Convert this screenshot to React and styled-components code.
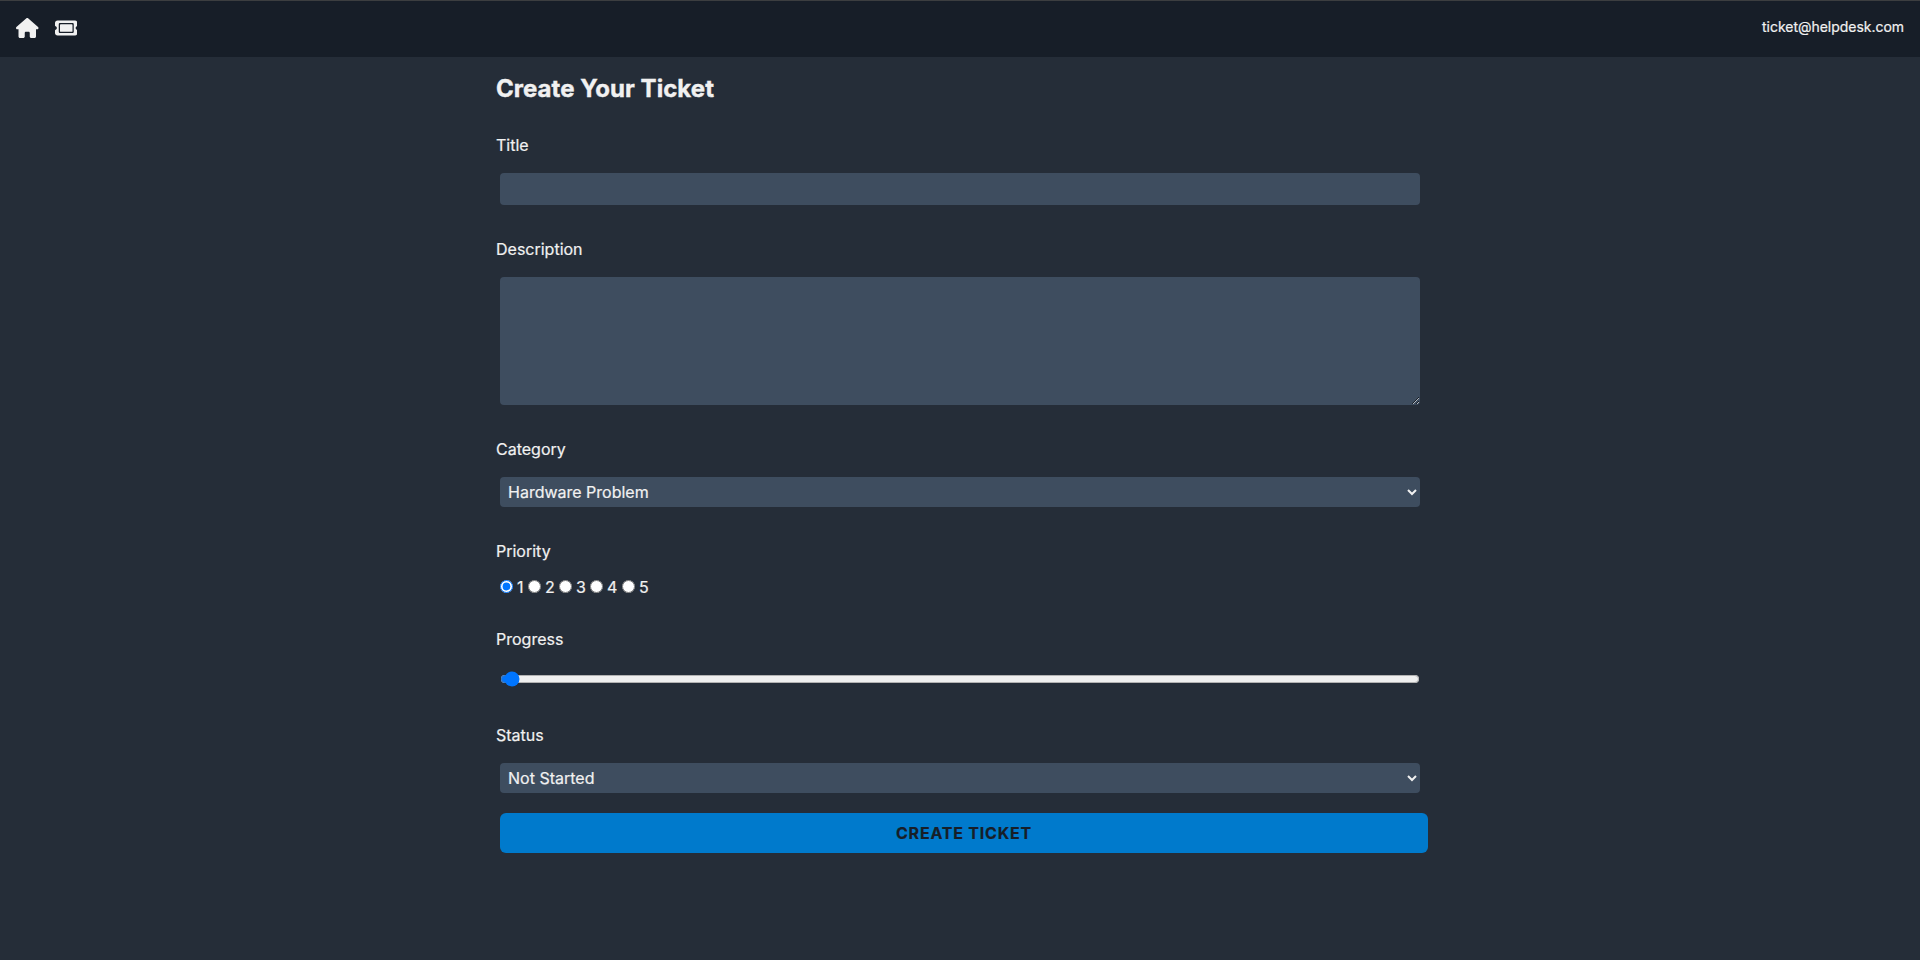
import React from "react";
import styled, { createGlobalStyle } from "styled-components";
import { FaHouse, FaTicket } from "react-icons/fa6";

const GlobalStyle = createGlobalStyle`
  *, *::before, *::after { box-sizing: border-box; }
  body {
    margin: 0;
    background: #252d38;
    color: #f1f1f1;
    font: 400 16px/24px Inter, "Liberation Sans", sans-serif;
    -webkit-text-stroke: 0.2px currentColor;
  }
  input, select, textarea, button { font: inherit; color: inherit; }
`;

const Page = styled.div`
  min-height: 100vh;
`;

const Nav = styled.nav`
  display: flex;
  align-items: center;
  justify-content: space-between;
  height: 57px;
  padding: 0 16px 2px;
  border-top: 1px solid #3c3e40;
  background: #171e28;
`;

const NavLinks = styled.div`
  display: flex;
  gap: 16px;
  svg { display: block; width: 22.5px; height: 20px; }
`;

const Email = styled.span`
  font-size: 14px;
  line-height: 20px;
  padding-bottom: 2px;
  letter-spacing: -0.03px;
`;

const Form = styled.form`
  width: 928px;
  margin: 0 auto;
  padding-top: 16px;
`;

const Heading = styled.h3`
  margin: 0 0 28px;
  font-size: 24px;
  line-height: 32px;
  font-weight: 700;
  letter-spacing: 0.05px;
  -webkit-text-stroke: 0.4px currentColor;
`;

const Field = styled.div`
  display: flex;
  flex-direction: column;
  gap: ${(p) => p.$gap ?? 16}px;
  margin-bottom: ${(p) => p.$after ?? 32}px;
`;

const Label = styled.label`
  height: 24px;
`;

const TextInput = styled.input`
  width: 920px;
  height: 32px;
  margin: 0 4px;
  padding: 4px;
  border: 0;
  border-radius: 4px;
  background: #3e4d5f;
`;

const TextArea = styled(TextInput).attrs({ as: "textarea" })`
  height: 128px;
`;

const Select = styled.select`
  width: 920px;
  height: 30px;
  margin: 0 4px;
  padding: 4px;
  border: 0;
  border-radius: 4px;
  background: #3e4d5f;
`;

const RadioRow = styled.div`
  display: flex;
  height: 24px;
  padding-left: 4px;
`;

const RadioOption = styled.label`
  display: flex;
  align-items: center;
  gap: 4px;
  width: ${(p) => p.$width}px;
  input { margin: 0 0 2px; width: 13px; height: 13px; }
`;

const Slider = styled.input`
  width: 920px;
  height: 16px;
  margin: 4px;
`;

const Submit = styled.button`
  display: block;
  width: 928px;
  height: 40px;
  margin-left: 4px;
  padding: 0;
  border: 0;
  border-radius: 6px;
  background: #007acc;
  color: #171e28;
  font-weight: 700;
  letter-spacing: 0.8px;
`;

const priorities = [
  { value: 1, width: 28 },
  { value: 2, width: 31 },
  { value: 3, width: 31 },
  { value: 4, width: 32 },
  { value: 5, width: 32 },
];

export default function App() {
  return (
    <Page>
      <GlobalStyle />
      <Nav>
        <NavLinks>
          <FaHouse />
          <FaTicket />
        </NavLinks>
        <Email>ticket@helpdesk.com</Email>
      </Nav>
      <Form onSubmit={(e) => e.preventDefault()}>
        <Heading>Create Your Ticket</Heading>
        <Field>
          <Label htmlFor="title">Title</Label>
          <TextInput id="title" type="text" />
        </Field>
        <Field>
          <Label htmlFor="description">Description</Label>
          <TextArea id="description" />
        </Field>
        <Field>
          <Label htmlFor="category">Category</Label>
          <Select id="category">
            <option>Hardware Problem</option>
            <option>Software Problem</option>
            <option>Project</option>
          </Select>
        </Field>
        <Field $gap={12} $after={28}>
          <Label as="span">Priority</Label>
          <RadioRow>
            {priorities.map(({ value, width }) => (
              <RadioOption key={value} $width={width}>
                <input type="radio" name="priority" defaultChecked={value === 1} />
                {value}
              </RadioOption>
            ))}
          </RadioRow>
        </Field>
        <Field>
          <Label htmlFor="progress">Progress</Label>
          <Slider id="progress" type="range" min="0" max="226" defaultValue="1" />
        </Field>
        <Field $after={20}>
          <Label htmlFor="status">Status</Label>
          <Select id="status">
            <option>Not Started</option>
            <option>Started</option>
            <option>Done</option>
          </Select>
        </Field>
        <Submit type="submit">CREATE TICKET</Submit>
      </Form>
    </Page>
  );
}
